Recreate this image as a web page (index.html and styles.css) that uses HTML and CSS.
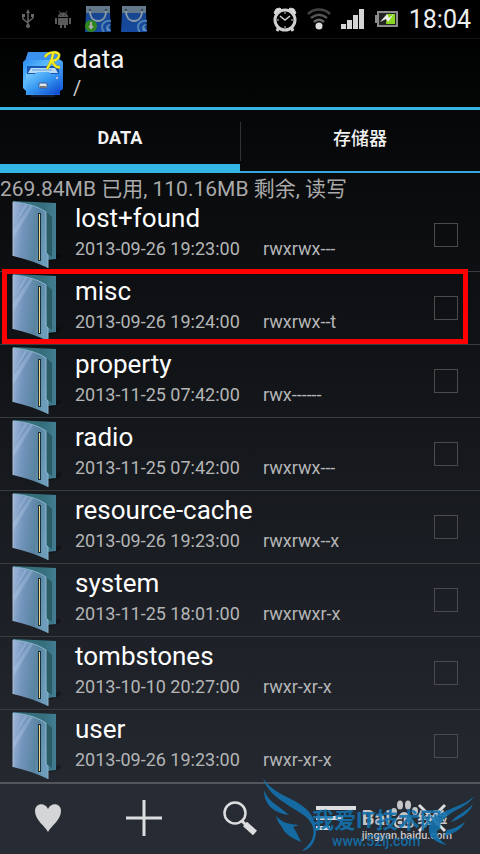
FILE: index.html
```html
<!DOCTYPE html>
<html lang="zh-CN">
<head>
    <meta charset="UTF-8">
    <meta name="viewport" content="width=device-width, initial-scale=1.0">
    <title>data</title>
    <link rel="stylesheet" href="styles.css">
</head>
<body>

<!-- Shared icon shapes -->
<svg class="defs" width="0" height="0" aria-hidden="true">
    <defs>
        <linearGradient id="front" x1="0" x2="1" y1="0" y2="0.2">
            <stop offset="0" stop-color="#a3b8da"/>
            <stop offset="0.35" stop-color="#7395bd"/>
            <stop offset="0.75" stop-color="#58839f"/>
            <stop offset="1" stop-color="#6d9dba"/>
        </linearGradient>
        <linearGradient id="back" x1="0" x2="1" y1="0" y2="0">
            <stop offset="0.7" stop-color="#356f7c"/>
            <stop offset="1" stop-color="#427d93"/>
        </linearGradient>
        <linearGradient id="bag" x1="0" x2="0" y1="0" y2="1">
            <stop offset="0" stop-color="#17448a"/>
            <stop offset="1" stop-color="#164aa0"/>
        </linearGradient>
        <linearGradient id="cabinet" x1="0" x2="1" y1="0" y2="1">
            <stop offset="0" stop-color="#2c8df0"/>
            <stop offset="0.35" stop-color="#5cbcff"/>
            <stop offset="1" stop-color="#0c4fd8"/>
        </linearGradient>
        <linearGradient id="drawer" x1="0" x2="1" y1="0" y2="1">
            <stop offset="0" stop-color="#7ed0ff"/>
            <stop offset="0.5" stop-color="#3597f2"/>
            <stop offset="1" stop-color="#0b46cc"/>
        </linearGradient>
    </defs>
    <symbol id="folder" viewBox="0 0 52 68">
        <path d="M36 58l12-6 1 4-8 4-5 1z" fill="#000" opacity=".3"/>
        <path d="M1 0l43 2v56l-9 1L1 50z" fill="url(#back)"/>
        <path d="M33 10l7 6v40l-5-4z" fill="#2b5b64"/>
        <path d="M1 1c12 1 24 4 33 10v41l2 2v13C26 62 14 58 1 55z" fill="url(#front)"/>
        <path d="M1 30L18 4l3 1L1 38zM3 22L13 3l3 1z" fill="#c0d0ea" opacity=".3"/>
        <path d="M1 1c12 1 24 4 33 10v41l2 2v13" fill="none" stroke="#8bb3cd"/>
        <path d="M1 1v54" stroke="#a9bfd6"/>
        <path d="M26 12h3v48h-3z" fill="#172f3b"/>
        <path d="M27 13h1v46h-1z" fill="#f0da8c"/>
    </symbol>
    <symbol id="bag-icon" viewBox="0 0 26 26">
        <path d="M1 0h24v7l1 19H0L1 7z" fill="url(#bag)"/>
        <path d="M1 0h24v7H1z" fill="#63788a"/>
        <path d="M5 5c0 6 3 10 8 10s8-4 8-10" fill="none" stroke="#8a9aa8" stroke-width="2"/>
        <circle cx="5" cy="4" r="1" fill="#263645"/>
        <circle cx="21" cy="4" r="1" fill="#263645"/>
        <path d="M26 15c-5-1-9 2-9 6 0 2 1 4 2 5" fill="none" stroke="#4e80b5" stroke-width="2"/>
        <path d="M26 18c-4 0-6 3-4 7h4l-3-4z" fill="#5c8aba"/>
    </symbol>
</svg>

<div class="screen">
    <!-- Status bar -->
    <div class="status-bar">
        <div class="notifications">
            <svg class="usb" width="12" height="20" viewBox="0 0 12 20" fill="none" stroke="#666" stroke-width="1.5">
                <path d="M6 2v16M1 6v4l5 4M11 6v3l-5 4"/>
                <path d="M6 0l2 4H4zM0 5h3v3H0zM9 5h3v3H9z" fill="#666" stroke="none"/>
                <circle cx="6" cy="17" r="2" fill="#666" stroke="none"/>
            </svg>
            <svg class="droid" width="16" height="17" viewBox="0 0 16 17" fill="#5a5a5a">
                <path d="M3 6c0-6 10-6 10 0zM3 7h10v7H3zM0 7h2v6H0zM14 7h2v6h-2zM5 14h2v3H5zM9 14h2v3H9z"/>
                <path d="M4 0l2 3M12 0l-2 3" stroke="#5a5a5a"/>
                <circle cx="6" cy="4" r="0.6" fill="#000"/>
                <circle cx="10" cy="4" r="0.6" fill="#000"/>
            </svg>
            <svg width="26" height="27" viewBox="0 0 26 27">
                <use href="#bag-icon" width="26" height="26"/>
                <circle cx="6" cy="20" r="6" fill="#30851d"/>
                <path d="M6 16v7M4 20l2 2 2-2" fill="none" stroke="#aaa" stroke-width="2"/>
            </svg>
            <svg width="26" height="27" viewBox="0 0 26 27"><use href="#bag-icon" width="26" height="26"/></svg>
        </div>
        <div class="system">
            <svg width="24" height="25" viewBox="0 0 24 25" fill="none" stroke="#d0d0d0">
                <path d="M6 20l-2 4M18 20l2 4" stroke-width="3"/>
                <path d="M1 6l2-4 4-1 2 2-6 5zM23 6l-2-4-4-1-2 2 6 5z" fill="#ddd"/>
                <circle cx="12" cy="13" r="10" stroke-width="3"/>
                <path d="M7 9l5 4 5-4" stroke-width="1.5"/>
                <path d="M12 5v2M12 19v2M4 13h2M18 13h2"/>
            </svg>
            <svg width="24" height="22" viewBox="0 0 24 22" fill="none" stroke-width="2.5">
                <path d="M1 6c6-6 16-6 22 0" stroke="#444"/>
                <path d="M4 10c5-4 11-4 16 0" stroke="#555"/>
                <path d="M7 14c3-3 7-3 10 0" stroke="#666"/>
                <circle cx="12" cy="18" r="3.5" fill="#ddd"/>
            </svg>
            <svg width="24" height="20" viewBox="0 0 24 20" fill="#d5d5d5">
                <path d="M0 15h5v5H0zM6 11h5v9H6zM12 6h5v14h-5zM18 0h5v20h-5z"/>
            </svg>
            <svg width="24" height="16" viewBox="0 0 24 16">
                <path d="M0 4h2V0h21v16H2v-4H0z" fill="#8c8c8c"/>
                <path d="M4 2h17v12H4z" fill="#222"/>
                <path d="M12 3h8v10h-9z" fill="#8ad51d"/>
                <path d="M5 11l7-8 2 4 5-4-6 8-2-3z" fill="#eee"/>
            </svg>
            <span class="clock">18:04</span>
        </div>
    </div>

    <!-- Title bar -->
    <header class="header">
        <svg class="app-icon" width="40" height="48" viewBox="0 0 40 48">
            <path d="M5 2h30l2 9H2z" fill="#3a92ee"/>
            <path d="M0 12l2-2h36l2 2v27l-3 2v4H3v-4l-3-3z" fill="url(#cabinet)"/>
            <path d="M4 16h32v8H4z" fill="#1756b4"/>
            <path d="M8 18h24l3 5H5z" fill="#bcdcf6"/>
            <path d="M9 20h20" stroke="#5a9ee0"/>
            <path d="M3 24h9l2-2h12l2 2h9v20H3z" fill="url(#drawer)"/>
            <path d="M16 33h8v5h-8z" fill="#dfe6ee" stroke="#345f9c"/>
            <path d="M17 36h6v2h-6z" fill="#777"/>
            <path d="M33 27h2v2h-2z" fill="#bbd"/>
            <path d="M8 46h24" stroke="#24345c"/>
            <path d="M22 7c3-6 15-6 14-1-1 4-6 5-9 5 4 0 4 8 10 6M30 3c0 6-3 11-6 16" fill="none" stroke="#a99a20" stroke-width="3"/>
            <path d="M22 7c3-6 15-6 14-1-1 4-6 5-9 5 4 0 4 8 10 6M30 3c0 6-3 11-6 16" fill="none" stroke="#f6f028" stroke-width="2"/>
        </svg>
        <div>
            <h1>data</h1>
            <p class="path">/</p>
        </div>
    </header>

    <nav class="tabs">
        <button type="button" class="tab active">DATA</button>
        <button type="button" class="tab">存储器</button>
    </nav>

    <p class="usage">269.84MB 已用, 110.16MB 剩余, 读写</p>

    <!-- File list -->
    <ul class="files">
        <li class="file">
            <svg class="folder"><use href="#folder"/></svg>
            <label for="f1"><span class="name">lost+found</span><span class="meta"><span>2013-09-26 19:23:00</span><span>rwxrwx---</span></span></label>
            <input type="checkbox" id="f1">
        </li>
        <li class="file marked">
            <svg class="folder"><use href="#folder"/></svg>
            <label for="f2"><span class="name">misc</span><span class="meta"><span>2013-09-26 19:24:00</span><span>rwxrwx--t</span></span></label>
            <input type="checkbox" id="f2">
        </li>
        <li class="file">
            <svg class="folder"><use href="#folder"/></svg>
            <label for="f3"><span class="name">property</span><span class="meta"><span>2013-11-25 07:42:00</span><span>rwx------</span></span></label>
            <input type="checkbox" id="f3">
        </li>
        <li class="file">
            <svg class="folder"><use href="#folder"/></svg>
            <label for="f4"><span class="name">radio</span><span class="meta"><span>2013-11-25 07:42:00</span><span>rwxrwx---</span></span></label>
            <input type="checkbox" id="f4">
        </li>
        <li class="file">
            <svg class="folder"><use href="#folder"/></svg>
            <label for="f5"><span class="name">resource-cache</span><span class="meta"><span>2013-09-26 19:23:00</span><span>rwxrwx--x</span></span></label>
            <input type="checkbox" id="f5">
        </li>
        <li class="file">
            <svg class="folder"><use href="#folder"/></svg>
            <label for="f6"><span class="name">system</span><span class="meta"><span>2013-11-25 18:01:00</span><span>rwxrwxr-x</span></span></label>
            <input type="checkbox" id="f6">
        </li>
        <li class="file">
            <svg class="folder"><use href="#folder"/></svg>
            <label for="f7"><span class="name">tombstones</span><span class="meta"><span>2013-10-10 20:27:00</span><span>rwxr-xr-x</span></span></label>
            <input type="checkbox" id="f7">
        </li>
        <li class="file">
            <svg class="folder"><use href="#folder"/></svg>
            <label for="f8"><span class="name">user</span><span class="meta"><span>2013-09-26 19:23:00</span><span>rwxr-xr-x</span></span></label>
            <input type="checkbox" id="f8">
        </li>
    </ul>

    <!-- Bottom toolbar -->
    <footer class="toolbar">
        <button type="button" aria-label="Favorites">
            <svg width="36" height="36" viewBox="0 0 36 36"><path d="M18 32C15 26 5 20 5 11c0-8 10-9 13-2 3-7 13-6 13 2 0 9-10 15-13 21z" fill="#d4d5d7"/></svg>
        </button>
        <button type="button" aria-label="Add">
            <svg width="36" height="36" viewBox="0 0 36 36"><path d="M18 0v36M0 18h36" stroke="#dcdddf" stroke-width="3"/></svg>
        </button>
        <button type="button" aria-label="Search">
            <svg width="36" height="36" viewBox="0 0 36 36" fill="none" stroke="#dcdddf"><circle cx="13" cy="13" r="10.5" stroke-width="2.5"/><path d="M20 21l4 4" stroke-width="3"/><path d="M23 24l10 9" stroke-width="6"/></svg>
        </button>
        <button type="button" aria-label="Sort">
            <svg width="40" height="36" viewBox="0 0 40 36"><path d="M0 8h40M0 18h27M0 28h14" stroke="#dcdddf" stroke-width="4"/></svg>
        </button>
        <button type="button" aria-label="Close">
            <svg width="36" height="36" viewBox="0 0 36 36"><path d="M5 5l26 26M31 5L5 31" stroke="#dcdddf" stroke-width="3"/></svg>
        </button>
    </footer>

    <!-- Site marks over the toolbar -->
    <div class="baidu-mark">
        <div class="baidu-name">
            <span>Bai</span>
            <svg width="27" height="29" viewBox="0 0 27 29" fill="#c4c6c8">
                <ellipse cx="3" cy="12" rx="3" ry="4"/>
                <ellipse cx="9" cy="5" rx="3" ry="4.5"/>
                <ellipse cx="17" cy="5" rx="3" ry="4.5"/>
                <ellipse cx="24" cy="11" rx="3" ry="4"/>
                <path d="M13 12c4 0 5 4 8 7 4 4 2 9-3 9H8c-5 0-7-5-3-9 3-3 4-7 8-7z"/>
                <path d="M12 17v8H8c-3 0-3-5 0-5h4M15 20v5h5v-5" fill="none" stroke="#25292f" stroke-width="1.5"/>
            </svg>
            <span class="jingyan">经验</span>
        </div>
        <div class="baidu-url">jingyan.baidu.com</div>
    </div>
    <div class="wing-mark">
        <svg width="212" height="74" viewBox="0 0 212 74" fill="#1472ad">
            <path d="M0 0C6 20 28 27 43 39c12 11 9 24-4 34 7-1 13-7 14-18C54 31 33 24 18 16 9 11 4 6 0 0z"/>
            <path d="M1 12c4 12 14 15 25 25C11 35 1 27 1 12z"/>
            <path d="M13 38c6 6 10 8 23 9l-6 2c3 4 5 8 8 15-11-5-17-9-19-15-3-3-5-7-6-11z"/>
            <path d="M212 17c-6 11-20 14-29 22-12 11-12 20 1 28-14-3-21-10-17-21 5-14 36-17 45-29z"/>
            <path d="M210 26c-3 9-13 15-22 18 5-7 15-10 22-18z"/>
            <path d="M202 44c-4 8-12 12-21 14l3-6c6-1 12-4 18-8z"/>
        </svg>
        <div class="wing-text">
            <span class="wing-name">我爱IT技术网</span>
            <span class="wing-url">www.52ij.com</span>
        </div>
    </div>
</div>

</body>
</html>
```
FILE: styles.css
```css
/* Basic Reset */
* {
    margin: 0;
    padding: 0;
    box-sizing: border-box;
}
body {
    font-family: Roboto, "Noto Sans CJK SC", sans-serif;
    background-color: #000;
    color: #fff;
}
button {
    background: none;
    border: none;
    color: inherit;
    font-family: inherit;
    cursor: pointer;
}
svg {
    display: block;
    flex-shrink: 0;
}
.defs {
    position: absolute;
}
.screen {
    position: relative;
    min-height: 100vh;
    background: linear-gradient(#000 38px, #020303 60px, #0a0c0e 200px, #272b33 100%);
}

/* Status bar */
.status-bar {
    height: 39px;
    display: flex;
    justify-content: space-between;
    align-items: center;
    padding: 0 9px 0 22px;
    background-color: #000;
    border-bottom: 1px solid #111;
}
.notifications {
    display: flex;
    align-items: center;
    gap: 10px;
}
.usb {
    margin-right: 11px;
}
.droid {
    margin-right: 4px;
}
.system {
    display: flex;
    align-items: center;
    gap: 10px;
}
.clock {
    font-size: 25px;
    line-height: 36px;
    color: #eee;
    padding-top: 2px;
}

/* Title bar */
.header {
    height: 71px;
    display: flex;
    align-items: center;
    gap: 10px;
    padding: 0 24px 2px 23px;
    border-bottom: 3px solid #33b5e5;
}
.app-icon {
    margin-top: 3px;
}
.header h1 {
    font-size: 26px;
    font-weight: 400;
    line-height: 32px;
    color: #f3f3f3;
}
.path {
    font-size: 20px;
    line-height: 26px;
    color: #ccc;
}

/* Tabs */
.tabs {
    height: 63px;
    display: grid;
    grid-template-columns: 1fr 1fr;
    background: linear-gradient(#333, #333) center 12px / 1px 39px no-repeat;
}
.tab {
    font-size: 18px;
    font-weight: 500;
    color: #f3f3f3;
    padding-bottom: 7px;
    border-bottom: 2px solid #33a5df;
}
.tab.active {
    font-weight: 700;
    padding-bottom: 0;
    border-bottom: 9px solid #33b5e5;
}

.usage {
    font-size: 21px;
    line-height: 26px;
    height: 26px;
    padding-top: 3px;
    color: #aaa;
}

/* File list */
.files {
    list-style: none;
}
.file {
    position: relative;
    height: 73px;
    display: flex;
    align-items: center;
    padding: 0 22px 0 12px;
    border-bottom: 1px solid #3a3d40;
}
.file:last-child {
    height: 72px;
    border-bottom: none;
}
.folder {
    width: 52px;
    height: 68px;
}
.file label {
    flex: 1;
    padding: 0 0 6px 11px;
}
.name {
    display: block;
    font-size: 26px;
    line-height: 34px;
}
.meta {
    display: grid;
    grid-template-columns: 188px 1fr;
    font-size: 18px;
    line-height: 28px;
    color: #b4b5b6;
}
.file input {
    appearance: none;
    width: 24px;
    height: 24px;
    border: 1px solid #4a4b4d;
}
.marked::after {
    content: "";
    position: absolute;
    top: -3px;
    right: 12px;
    bottom: 0;
    left: 2px;
    border: 5px solid #f00;
    z-index: 1;
    pointer-events: none;
}

/* Bottom toolbar */
.toolbar {
    height: 72px;
    display: grid;
    grid-template-columns: repeat(5, 1fr);
    border-top: 2px solid #53565a;
    background-color: #272b33;
}
.toolbar button {
    display: flex;
    justify-content: center;
    align-items: center;
    padding-bottom: 2px;
}

/* Site marks */
.baidu-mark {
    position: absolute;
    right: 28px;
    bottom: 11px;
    color: #c4c6c8;
}
.baidu-name {
    display: flex;
    align-items: flex-end;
    font-size: 20px;
    font-weight: 700;
    line-height: 22px;
}
.jingyan {
    font-size: 15px;
}
.baidu-url {
    font-size: 11px;
    font-weight: 500;
    line-height: 14px;
}
.wing-mark {
    position: absolute;
    right: 5px;
    bottom: 2px;
    color: #1472ad;
    opacity: 0.9;
}
.wing-text {
    position: absolute;
    top: 31px;
    left: 49px;
    white-space: nowrap;
}
.wing-name {
    display: block;
    font-size: 22px;
    font-weight: 700;
    line-height: 24px;
}
.wing-url {
    display: block;
    font-size: 14px;
    font-weight: 500;
    line-height: 16px;
    padding-left: 20px;
}
```
